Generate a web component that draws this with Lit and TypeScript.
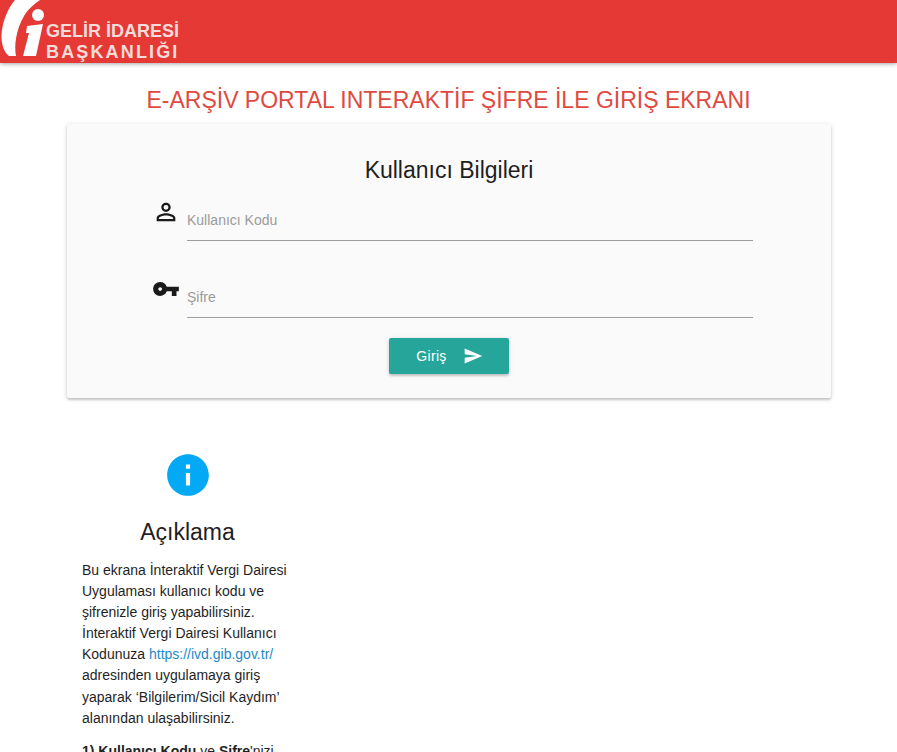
import { LitElement, html, css } from "lit";
import { customElement } from "lit/decorators.js";

@customElement("app-root")
export class AppRoot extends LitElement {
  static styles = css`
    :host {
      display: block;
      height: 752px;
      overflow: hidden;
      background: #fff;
      color: #1f1f1f;
      font-family: "Liberation Sans", Arial, sans-serif;
    }
    header {
      height: 63px;
      background: #e53935;
      box-shadow: 0 1px 4px rgba(0, 0, 0, 0.35);
      display: flex;
      overflow: hidden;
    }
    .mark {
      width: 46px;
      height: 63px;
      flex: none;
    }
    .brand {
      color: #f6dcd9;
      font-weight: bold;
      padding: 21px 0 0 0;
      font-size: 18px;
      line-height: 21px;
      white-space: nowrap;
    }
    .brand div:last-child {
      letter-spacing: 2.15px;
    }
    h1 {
      margin: 0;
      padding-top: 23px;
      height: 61px;
      box-sizing: border-box;
      text-align: center;
      font-size: 23px;
      line-height: 29px;
      font-weight: normal;
      color: #df4a3f;
    }
    .main {
      width: 764px;
      margin-left: 67px;
    }
    .card {
      box-sizing: border-box;
      height: 274px;
      background: #fafafa;
      border-radius: 2px;
      box-shadow: 0 2px 2px rgba(0, 0, 0, 0.14), 0 1px 5px rgba(0, 0, 0, 0.16);
      padding-top: 32px;
    }
    h2 {
      margin: 0;
      font-size: 23px;
      line-height: 29px;
      font-weight: normal;
      text-align: center;
      color: #1f1f1f;
    }
    .field {
      display: flex;
      margin-left: 85px;
      width: 601px;
      height: 77px;
      gap: 7px;
    }
    .field svg {
      width: 28px;
      height: 28px;
      flex: none;
      margin-top: 6px;
    }
    .input {
      flex: 1;
      box-sizing: border-box;
      height: 49px;
      border-bottom: 1px solid #9e9e9e;
      color: #9a9a9a;
      font-size: 14px;
      line-height: 16px;
      padding-top: 20px;
    }
    .first {
      margin-top: 7px;
    }
    .actions {
      display: flex;
      justify-content: center;
      margin-top: -8px;
    }
    button {
      width: 120px;
      height: 36px;
      border: 0;
      border-radius: 2px;
      background: #26a69a;
      color: #fff;
      font-family: inherit;
      font-size: 14px;
      font-weight: normal;
      letter-spacing: 0.3px;
      display: flex;
      align-items: center;
      justify-content: center;
      gap: 16px;
      padding: 0 0 0 1px;
      box-shadow: 0 2px 2px rgba(0, 0, 0, 0.14), 0 1px 5px rgba(0, 0, 0, 0.14);
    }
    button svg {
      width: 20px;
      height: 20px;
    }
    .info {
      box-sizing: border-box;
      width: 241px;
      padding: 52px 15px 0;
    }
    .info-icon {
      display: block;
      width: 50px;
      height: 50px;
      margin: 0 auto;
    }
    h3 {
      margin: 18px 0 0;
      font-size: 23px;
      line-height: 29px;
      font-weight: normal;
      text-align: center;
    }
    p {
      margin: 13px 0 0;
      font-size: 14px;
      line-height: 21.1px;
      color: #1f1f1f;
    }
    p + p {
      margin-top: 12px;
    }
    a {
      color: #1e88c9;
      text-decoration: none;
    }
  `;

  render() {
    return html`
      <header>
        <svg class="mark" viewBox="0 0 46 63">
          <path fill="#fff" d="M15 0C8 8 2 22 1.5 36C1.5 45 4 52 9 56L16 56C14 45 16 30 24 16C28 9 34 4 40 0Z" />
          <circle cx="38" cy="15" r="6" fill="#fff" />
          <path fill="#fff" d="M27 26L43 24L36 56L23 56L29 33L26 33Z" />
        </svg>
        <div class="brand">
          <div>GELİR İDARESİ</div>
          <div>BAŞKANLIĞI</div>
        </div>
      </header>
      <h1>E-ARŞİV PORTAL INTERAKTİF ŞİFRE İLE GİRİŞ EKRANI</h1>
      <div class="main">
        <div class="card">
          <h2>Kullanıcı Bilgileri</h2>
          <div class="field first">
            <svg viewBox="0 0 24 24" fill="#1a1a1a">
              <path d="M12 5.9a2.1 2.1 0 1 1 0 4.2 2.1 2.1 0 0 1 0-4.2m0 9c2.97 0 6.1 1.46 6.1 2.1v1.1H5.9V17c0-.64 3.13-2.1 6.1-2.1M12 4C9.79 4 8 5.79 8 8s1.79 4 4 4 4-1.79 4-4-1.79-4-4-4zm0 9c-2.67 0-8 1.34-8 4v3h16v-3c0-2.66-5.33-4-8-4z" />
            </svg>
            <div class="input">Kullanıcı Kodu</div>
          </div>
          <div class="field">
            <svg viewBox="0 0 24 24" fill="#1a1a1a">
              <path d="M12.65 10C11.83 7.67 9.61 6 7 6c-3.31 0-6 2.69-6 6s2.69 6 6 6c2.61 0 4.83-1.67 5.65-4H17v4h4v-4h2v-4H12.65zM7 13.6c-.9 0-1.6-.7-1.6-1.6s.7-1.6 1.6-1.6 1.6.7 1.6 1.6-.7 1.6-1.6 1.6z" />
            </svg>
            <div class="input">Şifre</div>
          </div>
          <div class="actions">
            <button>
              Giriş
              <svg viewBox="0 0 24 24" fill="#fff"><path d="M2.01 21L23 12 2.01 3 2 10l15 2-15 2z" /></svg>
            </button>
          </div>
        </div>
        <div class="info">
          <svg class="info-icon" viewBox="0 0 24 24">
            <path fill="#03a9f4" d="M12 2C6.48 2 2 6.48 2 12s4.48 10 10 10 10-4.48 10-10S17.52 2 12 2zm1 15h-2v-6h2v6zm0-8h-2V7h2v2z" />
          </svg>
          <h3>Açıklama</h3>
          <p>
            Bu ekrana İnteraktif Vergi Dairesi Uygulaması kullanıcı kodu ve şifrenizle giriş yapabilirsiniz.
            İnteraktif Vergi Dairesi Kullanıcı Kodunuza <a>https://ivd.gib.gov.tr/</a> adresinden uygulamaya giriş
            yaparak ‘Bilgilerim/Sicil Kaydım’ alanından ulaşabilirsiniz.
          </p>
          <p><b>1) Kullanıcı Kodu</b> ve <b>Şifre</b>'nizi</p>
        </div>
      </div>
    `;
  }
}
